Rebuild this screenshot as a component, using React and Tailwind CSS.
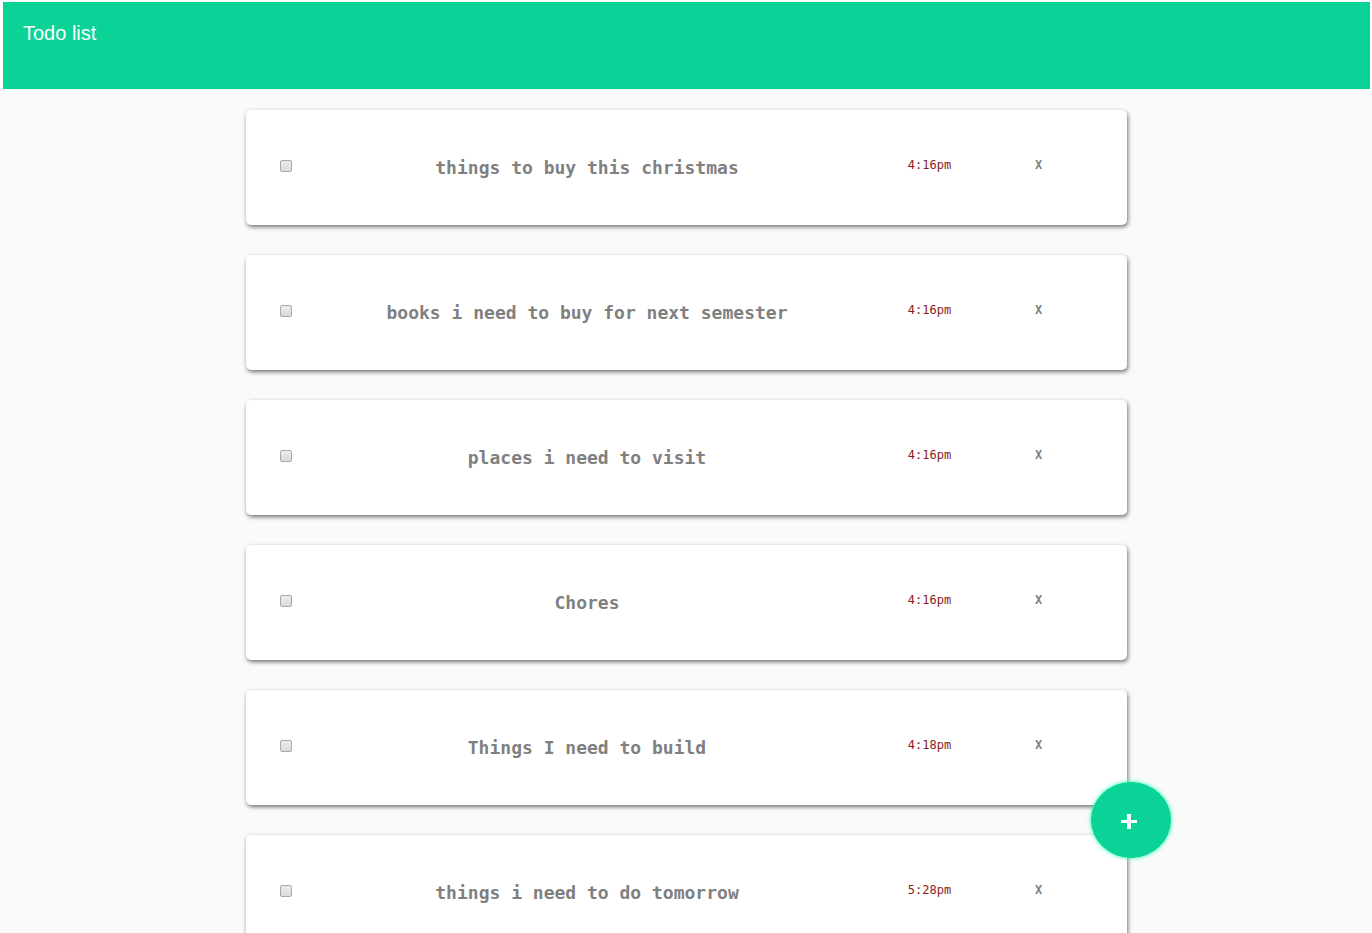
import { useState } from 'react';

const initialTodos = [
  { id: 1, title: 'things to buy this christmas', time: '4:16pm' },
  { id: 2, title: 'books i need to buy for next semester', time: '4:16pm' },
  { id: 3, title: 'places i need to visit', time: '4:16pm' },
  { id: 4, title: 'Chores', time: '4:16pm' },
  { id: 5, title: 'Things I need to build', time: '4:18pm' },
  { id: 6, title: 'things i need to do tomorrow', time: '5:28pm' },
];

function TodoCard({ todo, onRemove }) {
  const inputId = `todo-${todo.id}`;
  return (
    <li className="grid grid-cols-[12px_1fr_94px_124px] items-start rounded-[5px] bg-white py-[46px] pr-[26px] pl-[34px] font-['DejaVu_Sans_Mono',monospace] shadow-[1px_2px_4px_rgba(0,0,0,0.55)]">
      <input
        id={inputId}
        type="checkbox"
        className="mt-1 h-3 w-3 appearance-none rounded-[2px] border border-[#a9a9a9] bg-linear-to-b from-[#ececec] to-[#dadada] checked:from-[#0bd398] checked:to-[#0bd398]"
      />
      <label htmlFor={inputId} className="text-center text-[18px] leading-[23px] font-bold text-[#808080]">
        {todo.title}
      </label>
      <time className="text-center text-[12px] leading-[18px] text-[#8b1a1a]">{todo.time}</time>
      <button
        type="button"
        aria-label={`Remove ${todo.title}`}
        onClick={() => onRemove(todo.id)}
        className="cursor-pointer justify-self-center text-[12px] leading-[18px] font-bold text-[#808080]"
      >
        X
      </button>
    </li>
  );
}

export default function App() {
  const [todos, setTodos] = useState(initialTodos);
  const remove = (id) => setTodos((list) => list.filter((t) => t.id !== id));

  return (
    <div className="flex h-screen flex-col overflow-hidden bg-[#fafafa] font-['Liberation_Sans',Arial,sans-serif]">
      <div className="shrink-0 bg-white pt-[2px] pr-[2px] pl-[3px]">
        <header className="bg-[#0bd398] px-5 pt-[19px] pb-11">
          <h1 className="text-[20px] leading-6 text-white">Todo list</h1>
        </header>
      </div>
      <main className="min-h-0 flex-1 overflow-y-auto px-5 pt-[21px] [scrollbar-width:none]">
        <ul className="mx-auto flex max-w-[881px] flex-col gap-[30px] pb-[30px]">
          {todos.map((todo) => (
            <TodoCard key={todo.id} todo={todo} onRemove={remove} />
          ))}
        </ul>
      </main>
      <button
        type="button"
        aria-label="Add todo"
        className="fixed right-[201px] bottom-[75px] flex h-[76px] w-20 cursor-pointer items-center justify-center rounded-[50%] bg-[#0bd398] pt-[3px] pr-1 text-white shadow-[0_0_4px_#0bffb0]"
      >
        <svg width="16" height="15" viewBox="0 0 16 15" fill="currentColor" aria-hidden="true">
          <path d="M6 0h4v6h6v3h-6v6H6V9H0V6h6z" />
        </svg>
      </button>
    </div>
  );
}
